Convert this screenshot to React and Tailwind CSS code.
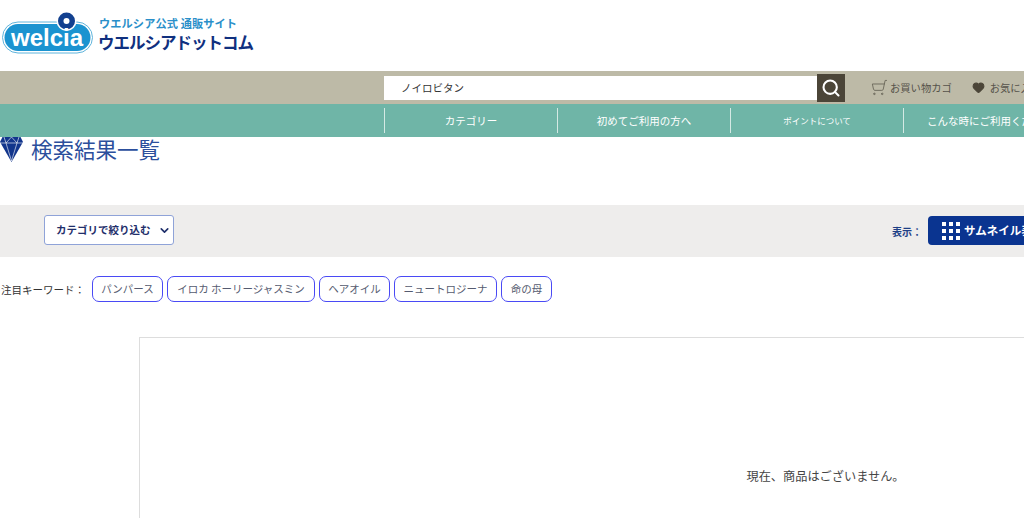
import { Search, ShoppingCart, Heart, ChevronDown } from 'lucide-react'

const navItems = [
  { label: 'カテゴリー', cls: 'text-[10.5px]' },
  { label: '初めてご利用の方へ', cls: 'text-[10.5px]' },
  { label: 'ポイントについて', cls: 'text-[8.5px]' },
  { label: 'こんな時にご利用ください', cls: 'text-[10.5px]' },
]
const keywords = [
  { label: 'パンパース', w: 'w-[71px]' },
  { label: 'イロカ ホーリージャスミン', w: 'w-[148px]' },
  { label: 'ヘアオイル', w: 'w-[71px]' },
  { label: 'ニュートロジーナ', w: 'w-[103px]' },
  { label: '命の母', w: 'w-[51px]' },
]

function Logo() {
  return (
    <div className="flex items-start pl-[2px] pt-[11px]">
      <svg width="92" height="43" viewBox="0 0 92 43" className="shrink-0">
        <rect x="0.5" y="11" width="90" height="31" rx="15.5" fill="#ffffff" stroke="#5fb4dc" strokeWidth="1" />
        <rect x="2.5" y="13" width="86" height="27" rx="13.5" fill="#1b93d0" />
        <circle cx="64.5" cy="10" r="10" fill="#ffffff" />
        <circle cx="64.5" cy="10" r="8.5" fill="#12408f" />
        <circle cx="64.5" cy="10" r="3" fill="#ffffff" />
        <text x="45" y="35" textAnchor="middle" fill="#ffffff" fontSize="24" fontWeight="700" fontFamily="Liberation Sans, sans-serif">welcia</text>
      </svg>
      <div className="ml-[4px] pt-[5px] font-['Noto_Sans_CJK_JP',sans-serif] font-bold">
        <div className="ml-[1px] text-[11.2px] leading-[14px] text-[#2a8fc9] whitespace-nowrap tracking-[0.1px]">ウエルシア公式 通販サイト</div>
        <div className="mt-[2px] text-[16.5px] leading-[20px] text-[#10307f] whitespace-nowrap tracking-[-1px]">ウエルシアドットコム</div>
      </div>
    </div>
  )
}

function Diamond() {
  return (
    <svg width="23" height="26" viewBox="0 0 23 26" className="shrink-0">
      <path d="M3 -1 H20 L23 5 L11.5 25 L0 5 Z" fill="#12358c" />
      <path d="M0 6 H23 M6 6 L11.5 24 L17 6 M4 0 L6 6 L11.5 0 L17 6 L19 0" stroke="#ffffff" strokeWidth="0.6" fill="none" />
    </svg>
  )
}

function Dots() {
  return (
    <div className="grid grid-cols-3 gap-[3px] shrink-0">
      {Array.from({ length: 9 }).map((_, i) => (
        <span key={i} className="w-[4px] h-[4px] bg-white" />
      ))}
    </div>
  )
}

export default function App() {
  return (
    <div className="w-[1024px] h-[518px] overflow-hidden bg-white font-['Noto_Sans_CJK_JP',sans-serif]">
      <header className="h-[71px]">
        <Logo />
      </header>

      <div className="h-[33px] bg-[#bdbaa7] flex items-center pl-[384px] whitespace-nowrap">
        <div className="w-[433px] h-[24px] bg-white flex items-center pl-[17px] text-[10.5px] text-[#333] shrink-0">ノイロビタン</div>
        <button className="w-[28px] h-[28px] bg-[#4b4538] flex items-center justify-center shrink-0">
          <Search size={20} color="#ffffff" strokeWidth={2.5} />
        </button>
        <ShoppingCart size={17} color="#6b675a" strokeWidth={1.3} className="ml-[26px] shrink-0 -scale-x-100" />
        <span className="ml-[2px] text-[10.3px] text-[#55524a] shrink-0">お買い物カゴ</span>
        <Heart size={13} color="#4b4538" fill="#4b4538" className="ml-[20px] shrink-0" />
        <span className="ml-[5px] text-[10.3px] text-[#55524a] shrink-0">お気に入り</span>
      </div>

      <nav className="h-[33px] bg-[#6fb5a7] flex items-center pl-[384px]">
        {navItems.map((item) => (
          <div key={item.label} className={`w-[173px] h-[25px] shrink-0 border-l border-[#d5e9e4] flex items-center justify-center text-white whitespace-nowrap ${item.cls}`}>
            {item.label}
          </div>
        ))}
      </nav>

      <div className="h-[68px] flex items-start">
        <Diamond />
        <h1 className="ml-[8px] text-[21.5px] leading-[28px] -mt-[2px] text-[#2c4f9c] font-normal whitespace-nowrap">検索結果一覧</h1>
      </div>

      <div className="h-[52px] bg-[#eeedec] flex items-start pt-[10px] pl-[44px]">
        <div className="w-[130px] h-[30px] bg-white border border-[#8fa3d8] rounded-[3px] flex items-center justify-between pl-[11px] pr-[2px] text-[10.5px] font-bold text-[#1f2f6b] shrink-0 whitespace-nowrap">
          カテゴリで絞り込む
          <ChevronDown size={13} strokeWidth={3} color="#1f2f6b" />
        </div>
        <span className="ml-[718px] mt-[9px] text-[10px] font-bold text-[#1d3f86] whitespace-nowrap shrink-0">表示：</span>
        <div className="ml-[6px] mt-[1px] w-[180px] h-[29px] bg-[#0a3490] rounded-[4px] flex items-center pl-[14px] text-white text-[11.5px] font-bold whitespace-nowrap shrink-0">
          <Dots />
          <span className="ml-[4px]">サムネイル表示</span>
        </div>
      </div>

      <div className="mt-[19px] h-[26px] flex items-center pl-[1px]">
        <span className="w-[91px] shrink-0 mt-[2px] text-[10.5px] text-[#333] whitespace-nowrap">注目キーワード：</span>
        <div className="flex gap-[4px]">
          {keywords.map((k) => (
            <div key={k.label} className={`${k.w} h-[26px] border border-[#4a4af5] rounded-[7px] flex items-center justify-center text-[10.5px] text-[#555b70] whitespace-nowrap`}>
              {k.label}
            </div>
          ))}
        </div>
      </div>

      <div className="mt-[35px] ml-[139px] w-[1373px] h-[300px] border border-[#dddddd] pt-[129px] text-center text-[12.2px] leading-[18px] text-[#444]">
        現在、商品はございません。
      </div>
    </div>
  )
}
